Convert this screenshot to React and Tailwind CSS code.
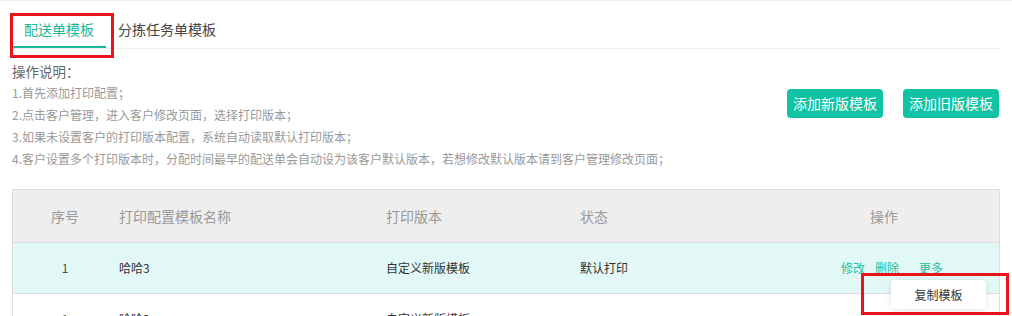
import React from "react";

const font = { fontFamily: '"Noto Sans CJK SC", "Noto Sans", sans-serif' };

function Row({ bg, full }) {
  return (
    <div className={`grid grid-cols-[104px_269px_194px_189px_230px] h-[51px] border-b border-[#dddddd] items-center text-[12px] leading-[20px] text-[#333333] ${bg}`}>
      <div className="text-center text-[#5a4a2a]">1</div>
      <div className="pl-[2px]">哈哈3</div>
      <div>自定义新版模板</div>
      <div>{full ? "默认打印" : ""}</div>
      {full ? (
        <div className="flex pl-[72px] text-[#1cbf9e]">
          <span>修改</span>
          <span className="ml-[10px]">删除</span>
          <span className="ml-[20px]">更多</span>
        </div>
      ) : (
        <div />
      )}
    </div>
  );
}

export default function App() {
  return (
    <div className="relative w-[1012px] h-[316px] overflow-hidden bg-white border-t border-[#eeeeee]" style={font}>
      <div className="px-[12px]">
        {/* tabs */}
        <div className="flex border-b border-[#eeeeee] w-[988px]">
          <div className="px-[12px] pt-[18px] pb-[7px] text-[14px] leading-[20px] text-[#17b99a] border-b-2 border-[#17b99a]">
            配送单模板
          </div>
          <div className="px-[12px] pt-[18px] pb-[9px] text-[14px] leading-[20px] text-[#444444]">
            分拣任务单模板
          </div>
        </div>

        {/* instructions + buttons */}
        <div className="flex justify-between items-start w-[988px] mt-[11px]">
          <div>
            <div className="text-[13.5px] leading-[22px] text-[#666666]">操作说明：</div>
            <div className="text-[12px] leading-[22px] text-[#999999]">
              <div>1.首先添加打印配置；</div>
              <div>2.点击客户管理，进入客户修改页面，选择打印版本；</div>
              <div>3.如果未设置客户的打印版本配置，系统自动读取默认打印版本；</div>
              <div>4.客户设置多个打印版本时，分配时间最早的配送单会自动设为该客户默认版本，若想修改默认版本请到客户管理修改页面；</div>
            </div>
          </div>
          <div className="flex gap-[20px] mt-[29px] mr-[1px]">
            <button className="w-[96px] h-[29px] rounded-[4px] bg-[#10c3a5] text-white text-[14px] leading-[29px]">添加新版模板</button>
            <button className="w-[96px] h-[29px] rounded-[4px] bg-[#10c3a5] text-white text-[14px] leading-[29px]">添加旧版模板</button>
          </div>
        </div>

        {/* table */}
        <div className="mt-[19px] w-[988px] border border-[#dddddd]">
          <div className="grid grid-cols-[104px_269px_194px_189px_230px] h-[53px] bg-[#eeeeee] border-b border-[#dddddd] items-center text-[14px] leading-[20px] text-[#999999]">
            <div className="text-center">序号</div>
            <div className="pl-[2px]">打印配置模板名称</div>
            <div>打印版本</div>
            <div>状态</div>
            <div className="text-center">操作</div>
          </div>
          <Row bg="bg-[#e2f8f6]" full />
          <Row bg="bg-white" />
        </div>
      </div>

      {/* dropdown menu */}
      <div className="absolute left-[891px] top-[279px] w-[95px] h-[29px] bg-white rounded-[4px] shadow-[0_1px_6px_rgba(0,0,0,0.12)] flex items-center justify-center text-[12px] text-[#333333]">
        复制模板
      </div>

      {/* annotation boxes */}
      <div className="absolute left-[10px] top-[12px] w-[104px] h-[45px] border-[3px] border-[#e8141b]" />
      <div className="absolute left-[861px] top-[272px] w-[148px] h-[42px] border-[3px] border-[#e8141b]" />
    </div>
  );
}
